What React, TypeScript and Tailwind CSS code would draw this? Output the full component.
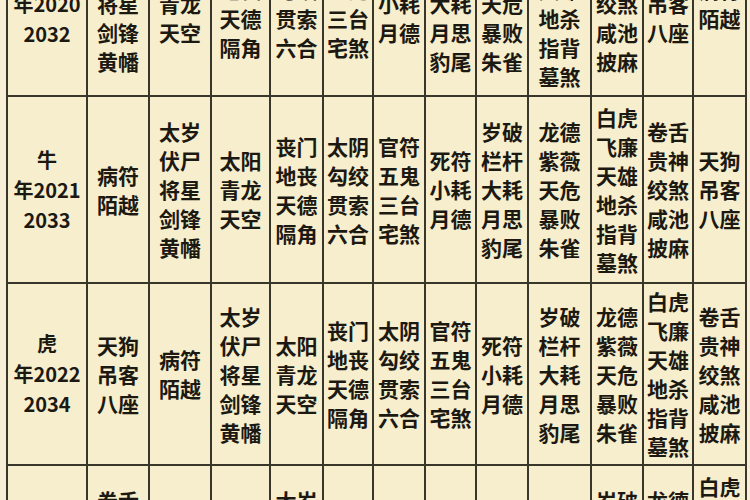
import React from "react";

const GODS: string[][] = [
  ["太岁", "伏尸", "将星", "剑锋", "黄幡"],
  ["太阳", "青龙", "天空"],
  ["丧门", "地丧", "天德", "隔角"],
  ["太阴", "勾绞", "贯索", "六合"],
  ["官符", "五鬼", "三台", "宅煞"],
  ["死符", "小耗", "月德"],
  ["岁破", "栏杆", "大耗", "月思", "豹尾"],
  ["龙德", "紫薇", "天危", "暴败", "朱雀"],
  ["白虎", "飞廉", "天雄", "地杀", "指背", "墓煞"],
  ["卷舌", "贵神", "绞煞", "咸池", "披麻"],
  ["天狗", "吊客", "八座"],
  ["病符", "陌越"],
];

const ROWS = [
  { animal: "鼠", year: 2020, h: "h-[183px]" },
  { animal: "牛", year: 2021, h: "h-[185px]" },
  { animal: "虎", year: 2022, h: "h-[180px]" },
  { animal: "兔", year: 2023, h: "h-[185px]" },
];

// rotate the twelve gods one column to the right per year
const godsFor = (rowIndex: number) =>
  GODS.map((_, i) => GODS[(i - rowIndex + 12) % 12]);

const Cell = ({ lines, h }: { lines: string[]; h: string }) => (
  <div
    className={`${h} bg-[#f6eecd] flex flex-col items-center justify-center text-[21px] leading-[29px] font-bold text-[#1c1912]`}
  >
    {lines.map((line, i) => (
      <span key={i}>{line}</span>
    ))}
  </div>
);

export default function App() {
  return (
    <div
      className="w-[750px] h-[500px] overflow-hidden bg-[#f7f0d6]"
      style={{ fontFamily: '"Noto Sans CJK SC", "Noto Sans", sans-serif' }}
    >
      <div className="ml-[6px] -mt-[90px] w-fit grid grid-cols-[78px_60px_60px_57px_51px_48px_50px_49px_50px_61px_50px_48px_51px] gap-[2px] border-2 border-[#39372b] bg-[#39372b]">
        {ROWS.map((row, r) => (
          <React.Fragment key={row.animal}>
            <div
              className={`${row.h} bg-[#f6eecd] flex flex-col items-center justify-center text-[20px] leading-[30px] font-bold text-[#1c1912]`}
            >
              <span>{row.animal}</span>
              <span>年{row.year}</span>
              <span>{row.year + 12}</span>
            </div>
            {godsFor(r).map((lines, i) => (
              <Cell key={i} lines={lines} h={row.h} />
            ))}
          </React.Fragment>
        ))}
      </div>
    </div>
  );
}
